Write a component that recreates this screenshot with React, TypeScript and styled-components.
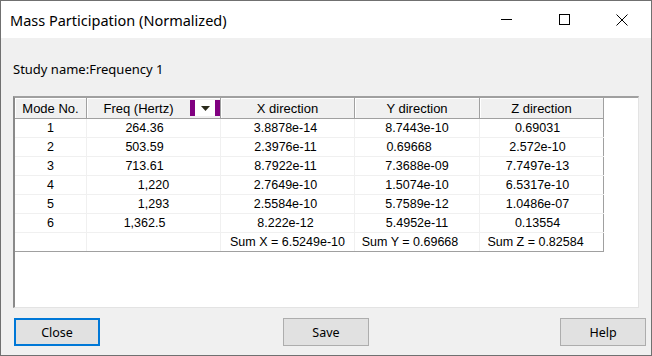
import styled, { createGlobalStyle } from 'styled-components'

// data
interface ModeRow {
  mode: string
  freq: string
  x: string
  y: string
  z: string
  freqShift?: number
  yShift?: number
}

const rows: ModeRow[] = [
  { mode: '1', freq: '264.36', x: '3.8878e-14', y: '8.7443e-10', z: '0.69031', freqShift: 18 },
  { mode: '2', freq: '503.59', x: '2.3976e-11', y: '0.69668', z: '2.572e-10', freqShift: 18, yShift: 16 },
  { mode: '3', freq: '713.61', x: '8.7922e-11', y: '7.3688e-09', z: '7.7497e-13', freqShift: 18 },
  { mode: '4', freq: '1,220', x: '2.7649e-10', y: '1.5074e-10', z: '6.5317e-10' },
  { mode: '5', freq: '1,293', x: '2.5584e-10', y: '5.7589e-12', z: '1.0486e-07' },
  { mode: '6', freq: '1,362.5', x: '8.222e-12', y: '5.4952e-11', z: '0.13554', freqShift: 18 },
]

// styled
const GlobalStyle = createGlobalStyle`
  html, body {
    margin: 0;
    padding: 0;
    background: #f0f0f0;
  }
  body {
    font-family: 'Noto Sans', 'Open Sans', sans-serif;
  }
`

const Window = styled.div`
  box-sizing: border-box;
  width: 652px;
  height: 356px;
  border: 1px solid #707070;
  background: #f0f0f0;
  display: flex;
  flex-direction: column;
  overflow: hidden;
`

const TitleBar = styled.div`
  height: 37px;
  flex-shrink: 0;
  background: #ffffff;
  display: flex;
  align-items: center;
`

const Title = styled.div`
  flex: 1;
  padding-left: 9px;
  font-family: 'Noto Sans', sans-serif;
  font-size: 14.5px;
  color: #000;
`

const CaptionButton = styled.div`
  width: 58px;
  height: 37px;
  display: flex;
  align-items: center;
  justify-content: center;
`

const Body = styled.div`
  flex: 1;
  display: flex;
  flex-direction: column;
  padding: 23px 5px 0 12px;
`

const StudyLabel = styled.div`
  height: 16px;
  line-height: 16px;
  font-family: 'Noto Sans', sans-serif;
  font-size: 13px;
  color: #000;
`

const ListFrame = styled.div`
  position: relative;
  box-sizing: border-box;
  width: 626px;
  height: 212px;
  margin-top: 19px;
  background: #ffffff;
  border-top: 2px solid #a0a0a0;
  border-left: 2px solid #8a8a8a;
  border-right: 1px solid #e3e3e3;
  border-bottom: 1px solid #e3e3e3;
`

const Grid = styled.div`
  width: 589px;
  font-family: 'Liberation Sans', Arial, sans-serif;
  font-size: 12.5px;
  color: #000;
`

const Row = styled.div<{ $header?: boolean; $last?: boolean }>`
  display: grid;
  grid-template-columns: 72px 134px 134px 125px 124px;
  height: ${(p) => (p.$header ? '21px' : '19px')};
  background: ${(p) => (p.$header ? '#f0f0f0' : '#ffffff')};
  box-sizing: border-box;
  border-bottom: 1px solid
    ${(p) => (p.$header || p.$last ? '#a0a0a0' : '#f0f0f0')};
`

const HeadCell = styled.div`
  display: flex;
  align-items: center;
  justify-content: center;
  font-size: 13px;
  border-right: 1px solid #a0a0a0;
  box-shadow: inset 1px 1px #ffffff;
  white-space: nowrap;
`

const HeadText = styled.span`
  flex: 1;
  text-align: center;
`

const SortWidget = styled.div`
  width: 30px;
  height: 16px;
  display: flex;
  align-items: stretch;
`

const SortBar = styled.div`
  width: 5px;
  background: #800080;
`

const SortFace = styled.div`
  flex: 1;
  display: flex;
  align-items: center;
  justify-content: center;
  background: #ffffff;
`

const Cell = styled.div<{ $shift?: number; $edge?: boolean }>`
  display: flex;
  align-items: center;
  justify-content: center;
  padding-right: ${(p) => p.$shift ?? 0}px;
  border-right: 1px solid ${(p) => (p.$edge ? '#a0a0a0' : '#f0f0f0')};
  white-space: nowrap;
`

const ButtonRow = styled.div`
  display: flex;
  margin-top: 10px;
  padding-left: 1px;
`

const DialogButton = styled.button<{ $primary?: boolean; $gap?: number }>`
  box-sizing: border-box;
  width: 86px;
  height: 28px;
  margin-left: ${(p) => (p.$gap === undefined ? 'auto' : `${p.$gap}px`)};
  padding: 0;
  background: #e1e1e1;
  border: ${(p) => (p.$primary ? '2px solid #0078d7' : '1px solid #adadad')};
  font-family: 'Noto Sans', sans-serif;
  font-size: 12.5px;
  color: #000;
`

// component
const App = () => {
  return (
    <>
      <GlobalStyle />
      <Window>
        <TitleBar>
          <Title>Mass Participation (Normalized)</Title>
          <CaptionButton>
            <svg width='11' height='11' viewBox='0 0 11 11'>
              <path d='M0 5.5H11' stroke='#000' strokeWidth='1' />
            </svg>
          </CaptionButton>
          <CaptionButton>
            <svg width='11' height='11' viewBox='0 0 11 11'>
              <rect x='0.5' y='0.5' width='10' height='10' fill='none' stroke='#000' />
            </svg>
          </CaptionButton>
          <CaptionButton>
            <svg width='12' height='12' viewBox='0 0 12 12'>
              <path d='M0.5 0.5L11.5 11.5M11.5 0.5L0.5 11.5' stroke='#000' strokeWidth='1' />
            </svg>
          </CaptionButton>
        </TitleBar>

        <Body>
          <StudyLabel>Study name:Frequency 1</StudyLabel>

          <ListFrame>
            <Grid>
              <Row $header>
                <HeadCell>Mode No.</HeadCell>
                <HeadCell>
                  <HeadText>Freq (Hertz)</HeadText>
                  <SortWidget>
                    <SortBar />
                    <SortFace>
                      <svg width='9' height='5' viewBox='0 0 9 5'>
                        <path d='M0 0H9L4.5 5Z' fill='#2b2b1b' />
                      </svg>
                    </SortFace>
                    <SortBar />
                  </SortWidget>
                </HeadCell>
                <HeadCell>X direction</HeadCell>
                <HeadCell>Y direction</HeadCell>
                <HeadCell>Z direction</HeadCell>
              </Row>
              {rows.map((r) => (
                <Row key={r.mode}>
                  <Cell>{r.mode}</Cell>
                  <Cell $shift={r.freqShift}>{r.freq}</Cell>
                  <Cell $shift={4}>{r.x}</Cell>
                  <Cell $shift={r.yShift}>{r.y}</Cell>
                  <Cell $shift={8} $edge>
                    {r.z}
                  </Cell>
                </Row>
              ))}
              <Row $last>
                <Cell />
                <Cell />
                <Cell>Sum X = 6.5249e-10</Cell>
                <Cell $shift={14}>Sum Y = 0.69668</Cell>
                <Cell $shift={12} $edge>
                  Sum Z = 0.82584
                </Cell>
              </Row>
            </Grid>
          </ListFrame>

          <ButtonRow>
            <DialogButton $primary $gap={0}>
              Close
            </DialogButton>
            <DialogButton $gap={183}>Save</DialogButton>
            <DialogButton>Help</DialogButton>
          </ButtonRow>
        </Body>
      </Window>
    </>
  )
}

export default App
